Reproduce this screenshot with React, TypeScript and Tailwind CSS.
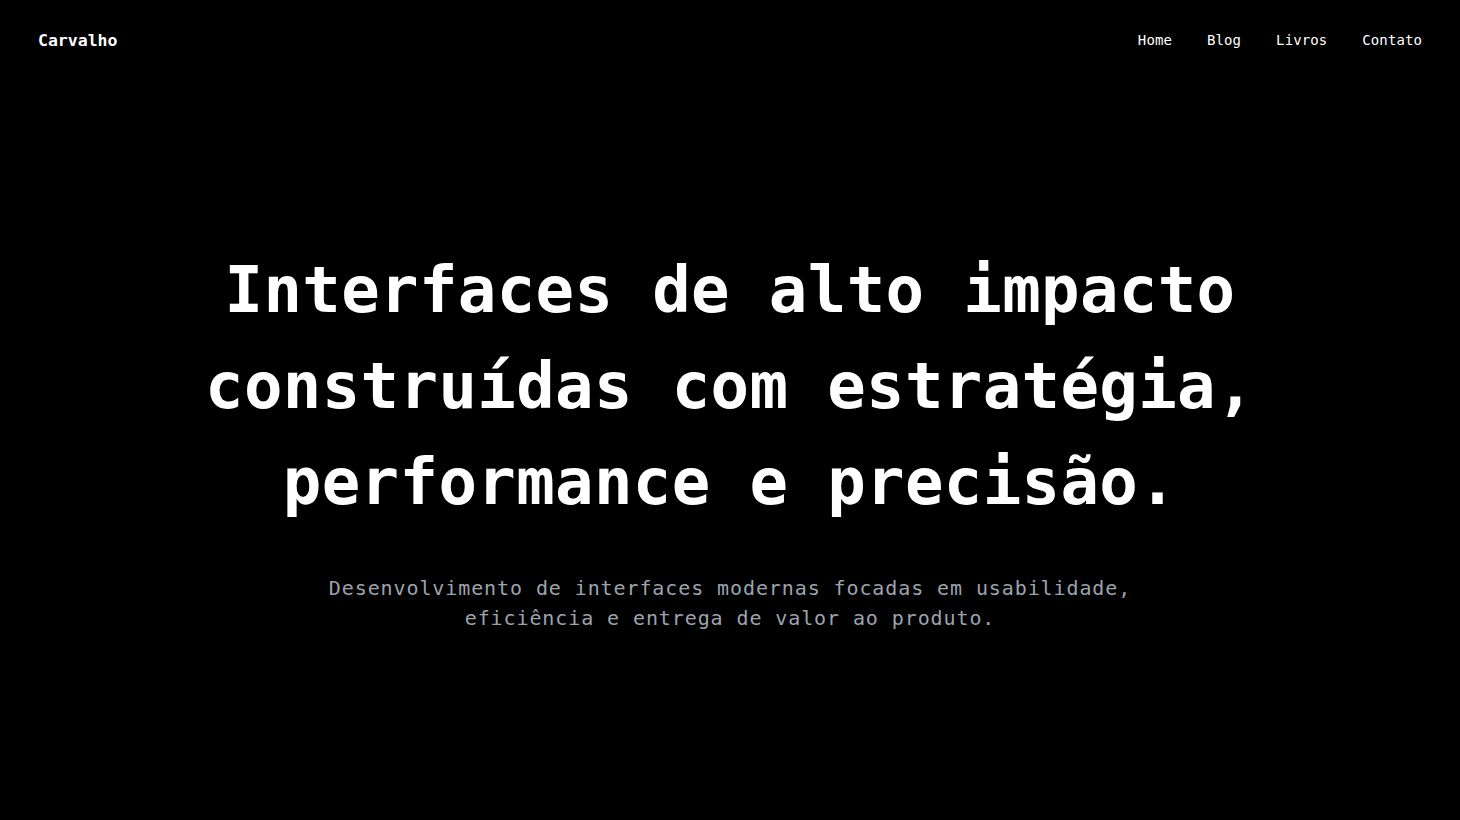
const mono = "font-['DejaVu_Sans_Mono','Liberation_Mono',monospace]";

const links = ["Home", "Blog", "Livros", "Contato"];

const Header = () => {
  return (
    <header className={`flex h-20 items-center justify-between px-[38px] ${mono}`}>
      <a href="#" className="pt-[2px] text-[16.5px] font-bold text-white">Carvalho</a>
      <nav className="flex items-center gap-[35px]">
        {links.map((link) => (
          <a key={link} href="#" className="text-[14px] tracking-[0.1px] text-white">
            {link}
          </a>
        ))}
      </nav>
    </header>
  );
};

const Hero = () => {
  return (
    <section className={`flex flex-col items-center pt-[162px] text-center ${mono}`}>
      <h1 className="max-w-[1100px] text-[64px] font-bold leading-[96px] tracking-[0.35px] text-white">
        Interfaces de alto impacto construídas com estratégia, performance e precisão.
      </h1>
      <p className="mt-[43px] max-w-[860px] text-[20px] leading-[30px] tracking-[0.9px] text-[#9ca3af]">
        Desenvolvimento de interfaces modernas focadas em usabilidade, eficiência e entrega de valor ao produto.
      </p>
    </section>
  );
};

export default function App() {
  return (
    <div className="min-h-screen w-full bg-black">
      <Header />
      <Hero />
    </div>
  );
}
